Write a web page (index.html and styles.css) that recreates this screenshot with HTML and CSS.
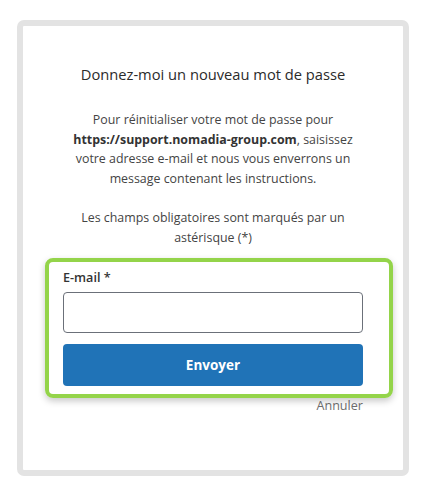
FILE: index.html
```html
<!DOCTYPE html>
<html lang="fr">
<head>
<meta charset="utf-8">
<link rel="stylesheet" href="styles.css">
</head>
<body>
<div class="card">
  <h1 class="title">Donnez-moi un nouveau mot de passe</h1>
  <p class="intro">Pour réinitialiser votre mot de passe pour <strong>https://support.nomadia-group.com</strong>, saisissez votre adresse e-mail et nous vous enverrons un message contenant les instructions.</p>
  <p class="intro">Les champs obligatoires sont marqués par un astérisque (*)</p>
  <form class="form">
    <div class="highlight"></div>
    <label class="label" for="email">E-mail *</label>
    <input class="input" id="email" type="email">
    <button class="btn" type="button">Envoyer</button>
    <div class="cancel-row"><a class="cancel" href="#">Annuler</a></div>
  </form>
</div>
</body>
</html>
```
FILE: styles.css
```css
html, body { margin: 0; padding: 0; background: #fff; }
body {
  padding: 20px 0 0 17px;
  font-family: "Open Sans", "Noto Sans", sans-serif;
  color: #333;
}
.card {
  box-sizing: border-box;
  width: 392px;
  height: 456px;
  border: 6px solid #e3e3e3;
  border-radius: 7px;
  padding: 38px 40px 0 40px;
  display: flex;
  flex-direction: column;
}
.title {
  margin: 0;
  font-size: 14.7px;
  font-weight: 400;
  line-height: 20px;
  text-align: center;
  color: #2b2b2b;
}
.intro {
  margin: 26px 0 0 0;
  font-size: 12.4px;
  line-height: 19.5px;
  text-align: center;
  color: #444;
}
.intro + .intro { margin-top: 20px; }
.intro strong { font-weight: 700; color: #333; }
.form {
  position: relative;
  margin-top: 22px;
  display: flex;
  flex-direction: column;
}
.highlight {
  position: absolute;
  left: -18px;
  right: -30px;
  top: -11px;
  height: 140px;
  box-sizing: border-box;
  border: 4px solid #94d44a;
  border-radius: 8px;
  box-shadow: 0 3px 7px rgba(0,0,0,0.22);
  pointer-events: none;
}
.label {
  font-size: 12.6px;
  font-weight: 600;
  line-height: 18px;
  color: #333;
}
.input {
  box-sizing: border-box;
  margin-top: 5px;
  height: 41px;
  width: 100%;
  border: 1px solid #6b7079;
  border-radius: 4px;
  padding: 0 10px;
  font: inherit;
}
.btn {
  margin-top: 11px;
  height: 42px;
  width: 100%;
  border: 0;
  border-radius: 4px;
  background: #2073b7;
  color: #fff;
  font-family: "Open Sans", "Noto Sans", sans-serif;
  font-size: 13.5px;
  font-weight: 700;
}
.cancel-row {
  margin-top: 11px;
  display: flex;
  justify-content: flex-end;
}
.cancel {
  font-size: 12.6px;
  line-height: 18px;
  color: #6e6e6e;
  text-decoration: none;
}
```
